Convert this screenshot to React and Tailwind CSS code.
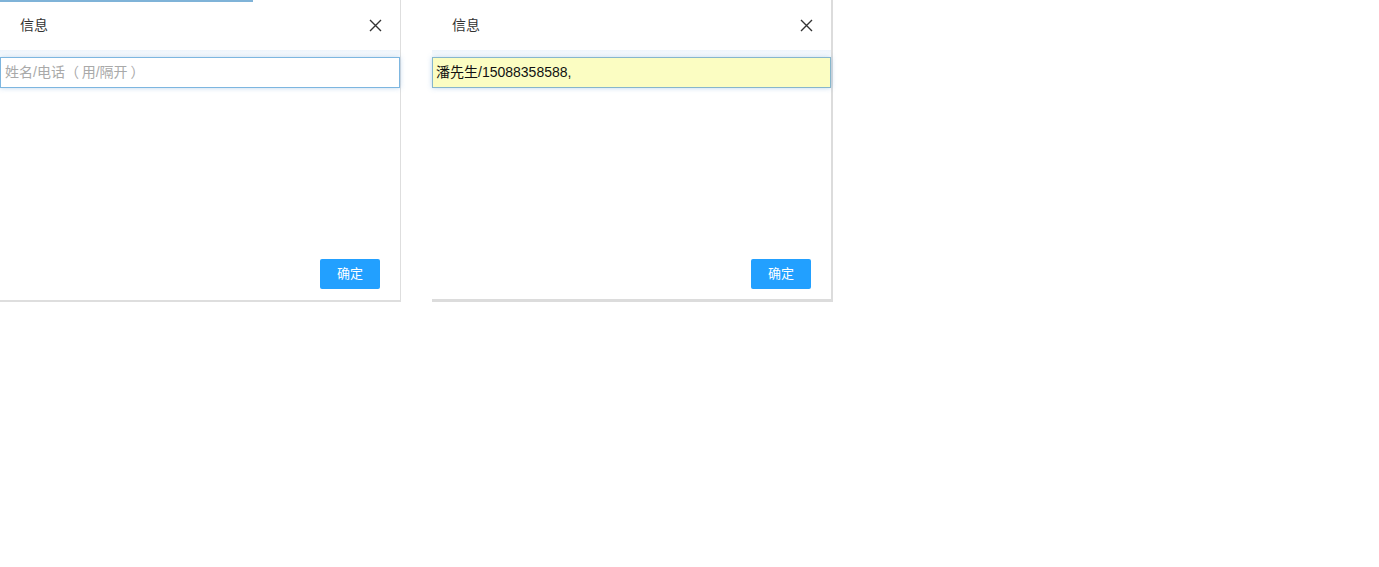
import React from "react";

const font = { fontFamily: '"Liberation Sans", "Noto Sans CJK SC", sans-serif' };

function CloseIcon() {
  return (
    <svg width="13" height="13" viewBox="0 0 13 13" className="block">
      <path d="M1 1L12 12M12 1L1 12" stroke="#333" strokeWidth="1.4" />
    </svg>
  );
}

function Dialog({ filled, topLine }) {
  return (
    <div
      className={
        "relative flex h-[302px] w-[401px] flex-col bg-white " +
        (filled
          ? "border-r-[2px] border-b-[3px] border-[#dcdcdc]"
          : "border-r border-b-[2px] border-[#dedede]")
      }
    >
      {topLine && <div className="absolute left-0 top-0 h-[2px] w-[253px] bg-[#7fb3d8]" />}
      <div className="flex h-[50px] items-center justify-between pl-5 pr-[18px]">
        <span className="text-[14px] text-[#333]">信息</span>
        <CloseIcon />
      </div>
      <div className="h-[7px] bg-gradient-to-b from-[#edf4fb] to-white" />
      {filled ? (
        <div className="flex h-[31px] items-center border border-[#86b6cc] bg-[#fbfdc2] pl-[3px] text-[14px] text-[#111] shadow-[0_0_5px_rgba(110,165,215,0.45)]">
          潘先生/15088358588,
        </div>
      ) : (
        <div className="flex h-[31px] items-center border border-[#7db6e0] bg-white pl-1 text-[14px] text-[#a9a9a9] shadow-[0_0_5px_rgba(110,165,215,0.45)]">
          姓名/电话（&thinsp;用/隔开&thinsp;）
        </div>
      )}
      <div className="flex-1" />
      <div className={"flex justify-end pr-5 " + (filled ? "pb-[10px]" : "pb-[11px]")}>
        <button className="h-[30px] w-[60px] rounded-[2px] bg-[#22a0ff] text-[13px] text-white">
          确定
        </button>
      </div>
    </div>
  );
}

export default function App() {
  return (
    <div className="h-[567px] w-[1379px] bg-white" style={font}>
      <div className="flex items-start gap-[31px]">
        <Dialog topLine />
        <Dialog filled />
      </div>
    </div>
  );
}
